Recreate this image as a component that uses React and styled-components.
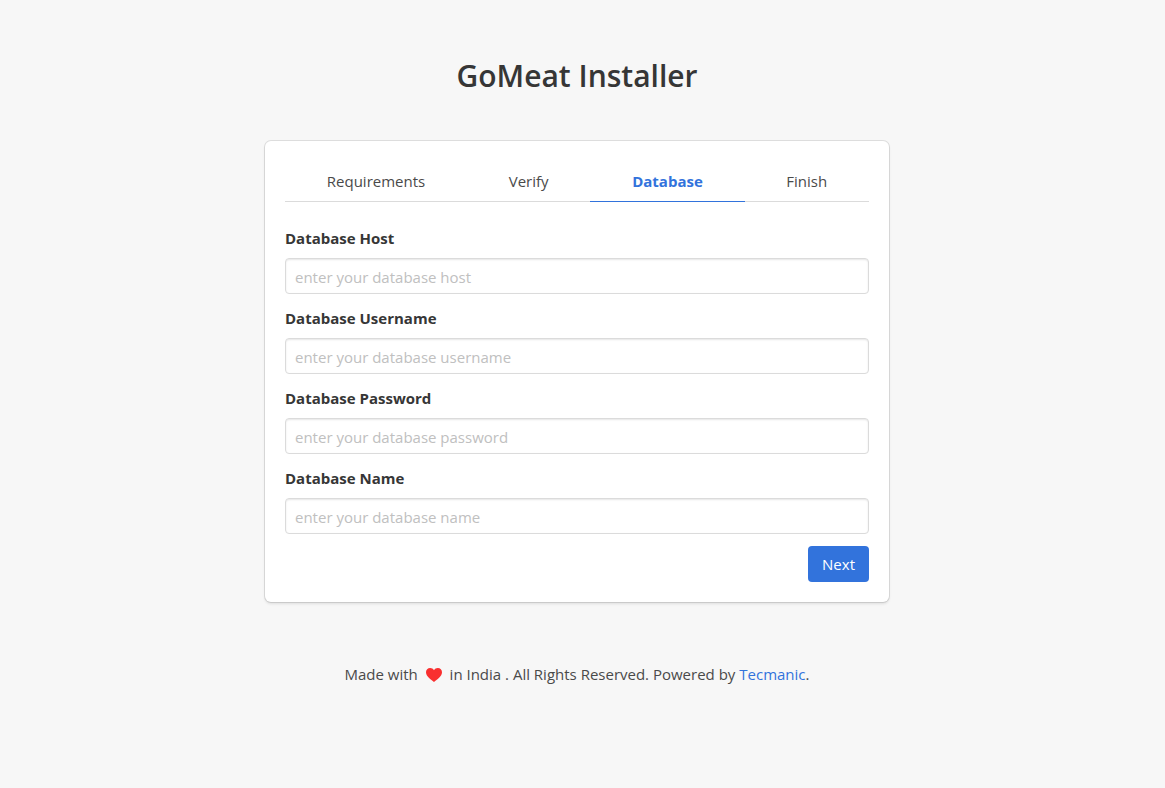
import React from "react";
import styled, { createGlobalStyle } from "styled-components";

const GlobalStyle = createGlobalStyle`
  *, *::before, *::after { box-sizing: border-box; }
  body {
    margin: 0;
    background: #f7f7f7;
    color: #363636;
    font-family: "Open Sans", "Noto Sans", sans-serif;
    font-size: 15px;
    line-height: 24px;
  }
`;

const Page = styled.div`
  padding: 48px 23px 0 12px;
`;

const Column = styled.main`
  max-width: 624px;
  margin: 0 auto;
`;

const Title = styled.h1`
  margin: 0 0 37px;
  font-size: 30px;
  line-height: 56px;
  font-weight: 600;
  text-align: center;
`;

const Card = styled.section`
  background: #fff;
  border-radius: 6px;
  padding: 20px;
  box-shadow: 0 2px 3px rgba(10, 10, 10, 0.1), 0 0 0 1px rgba(10, 10, 10, 0.1);
`;

const Tabs = styled.ul`
  display: flex;
  list-style: none;
  margin: 0 0 24px;
  padding: 0;
  border-bottom: 1px solid #dbdbdb;
`;

const Tab = styled.li`
  flex: 1 1 auto;
  display: flex;
  justify-content: center;
  margin-bottom: -1px;
  padding: 8px 0;
  border-bottom: 1px solid ${(p) => (p.$active ? "#3273dc" : "#dbdbdb")};
  color: ${(p) => (p.$active ? "#3273dc" : "#4a4a4a")};
  font-weight: ${(p) => (p.$active ? 700 : 400)};
`;

const Field = styled.div`
  margin-bottom: 12px;
`;

const Label = styled.label`
  display: block;
  margin-bottom: 8px;
  font-weight: 700;
`;

const Input = styled.input`
  display: block;
  width: 100%;
  height: 36px;
  padding: 6px 9px 4px;
  border: 1px solid #dbdbdb;
  border-radius: 4px;
  box-shadow: inset 0 1px 2px rgba(10, 10, 10, 0.1);
  color: #363636;
  font: inherit;
  &::placeholder { color: #c0c0c0; opacity: 1; }
`;

const Actions = styled.div`
  display: flex;
  justify-content: flex-end;
`;

const Button = styled.button`
  height: 36px;
  padding: 0 14px;
  border: 0;
  border-radius: 4px;
  background: #3273dc;
  color: #fff;
  font: inherit;
  cursor: pointer;
`;

const Footer = styled.footer`
  padding: 60px 0 24px;
  text-align: center;
  color: #4a4a4a;
`;

const Heart = styled.svg`
  width: 16px;
  height: 16px;
  margin: 0 4px;
  vertical-align: -3px;
`;

const Link = styled.a`
  color: #3273dc;
  text-decoration: none;
`;

const tabs = ["Requirements", "Verify", "Database", "Finish"];
const fields = ["host", "username", "password", "name"];

export default function App() {
  return (
    <Page>
      <GlobalStyle />
      <Column>
        <Title>GoMeat Installer</Title>
        <Card>
          <Tabs>
            {tabs.map((t) => (
              <Tab key={t} $active={t === "Database"}>{t}</Tab>
            ))}
          </Tabs>
          <form onSubmit={(e) => e.preventDefault()}>
            {fields.map((f) => (
              <Field key={f}>
                <Label htmlFor={f}>Database {f[0].toUpperCase() + f.slice(1)}</Label>
                <Input id={f} placeholder={`enter your database ${f}`} />
              </Field>
            ))}
            <Actions><Button type="submit">Next</Button></Actions>
          </form>
        </Card>
        <Footer>
          Made with{" "}
          <Heart viewBox="0 0 16 16" aria-hidden="true">
            <path fill="#f92f2f" d="M8 15C5 12.700 0 9.500 0 5.300 0 2.900 1.800 1 4.100 1 5.800 1 7.200 1.900 8 3.300 8.800 1.900 10.200 1 11.900 1 14.200 1 16 2.900 16 5.300 16 9.500 11 12.700 8 15Z" />
          </Heart>{" "}
          in India . All Rights Reserved. Powered by <Link href="#">Tecmanic</Link>.
        </Footer>
      </Column>
    </Page>
  );
}
